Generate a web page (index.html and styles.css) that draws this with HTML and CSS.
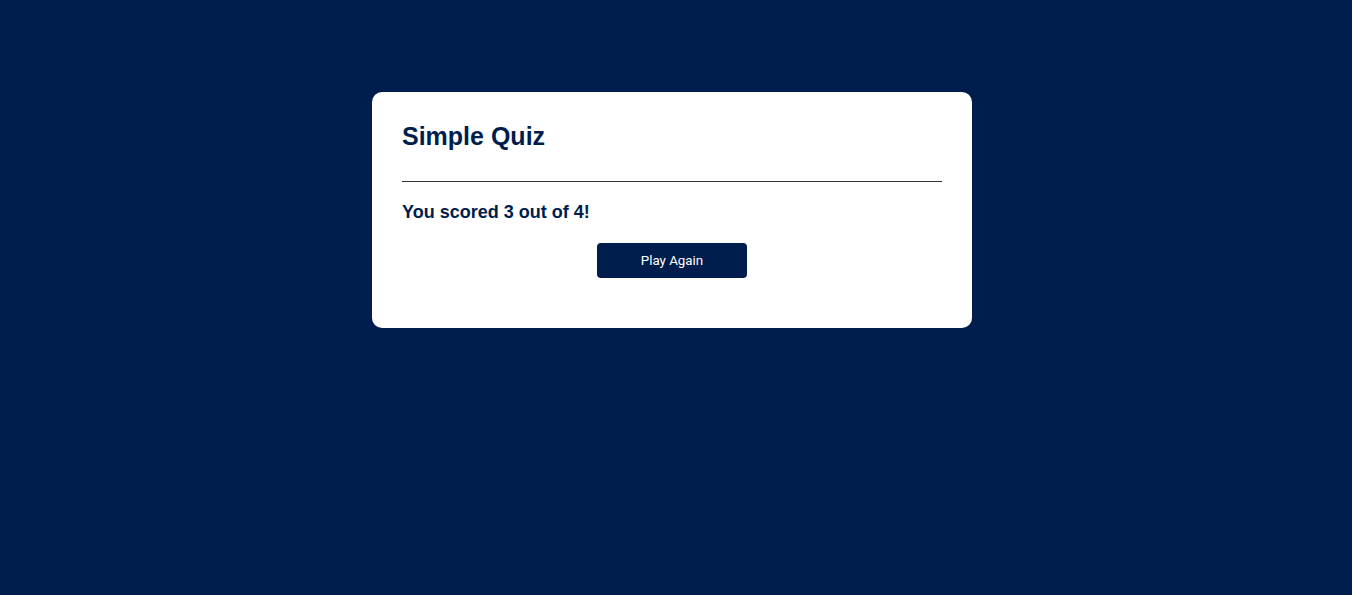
FILE: index.html
```html
<!DOCTYPE html>
<html lang="en">
<head>
<meta charset="utf-8">
<title>Simple Quiz</title>
<link rel="stylesheet" href="styles.css">
</head>
<body>
<div class="app">
  <h1 class="title">Simple Quiz</h1>
  <div class="quiz">
    <h2 class="question">You scored 3 out of 4!</h2>
    <button class="next-btn">Play Again</button>
  </div>
</div>
</body>
</html>
```
FILE: styles.css
```css
* {
  margin: 0;
  padding: 0;
  box-sizing: border-box;
}
body {
  background: #001e4d;
  font-family: "Liberation Sans", Arial, sans-serif;
  min-height: 595px;
  padding: 92px 8px 0 0;
}
.app {
  background: #fff;
  width: 600px;
  margin: 0 auto;
  border-radius: 10px;
  padding: 30px 30px 50px;
}
.title {
  font-size: 25px;
  line-height: 29px;
  color: #001e4d;
  font-weight: 700;
  border-bottom: 1px solid #333;
  padding-bottom: 30px;
}
.quiz {
  padding-top: 20px;
}
.question {
  font-size: 18px;
  line-height: 21px;
  color: #001e4d;
  font-weight: 700;
}
.next-btn {
  display: block;
  background: #001e4d;
  color: #fff;
  font-family: Roboto, "Liberation Sans", sans-serif;
  font-size: 13.33px;
  font-weight: 400;
  width: 150px;
  height: 35px;
  border: 0;
  border-radius: 4px;
  margin: 20px auto 0;
  cursor: pointer;
}
```
